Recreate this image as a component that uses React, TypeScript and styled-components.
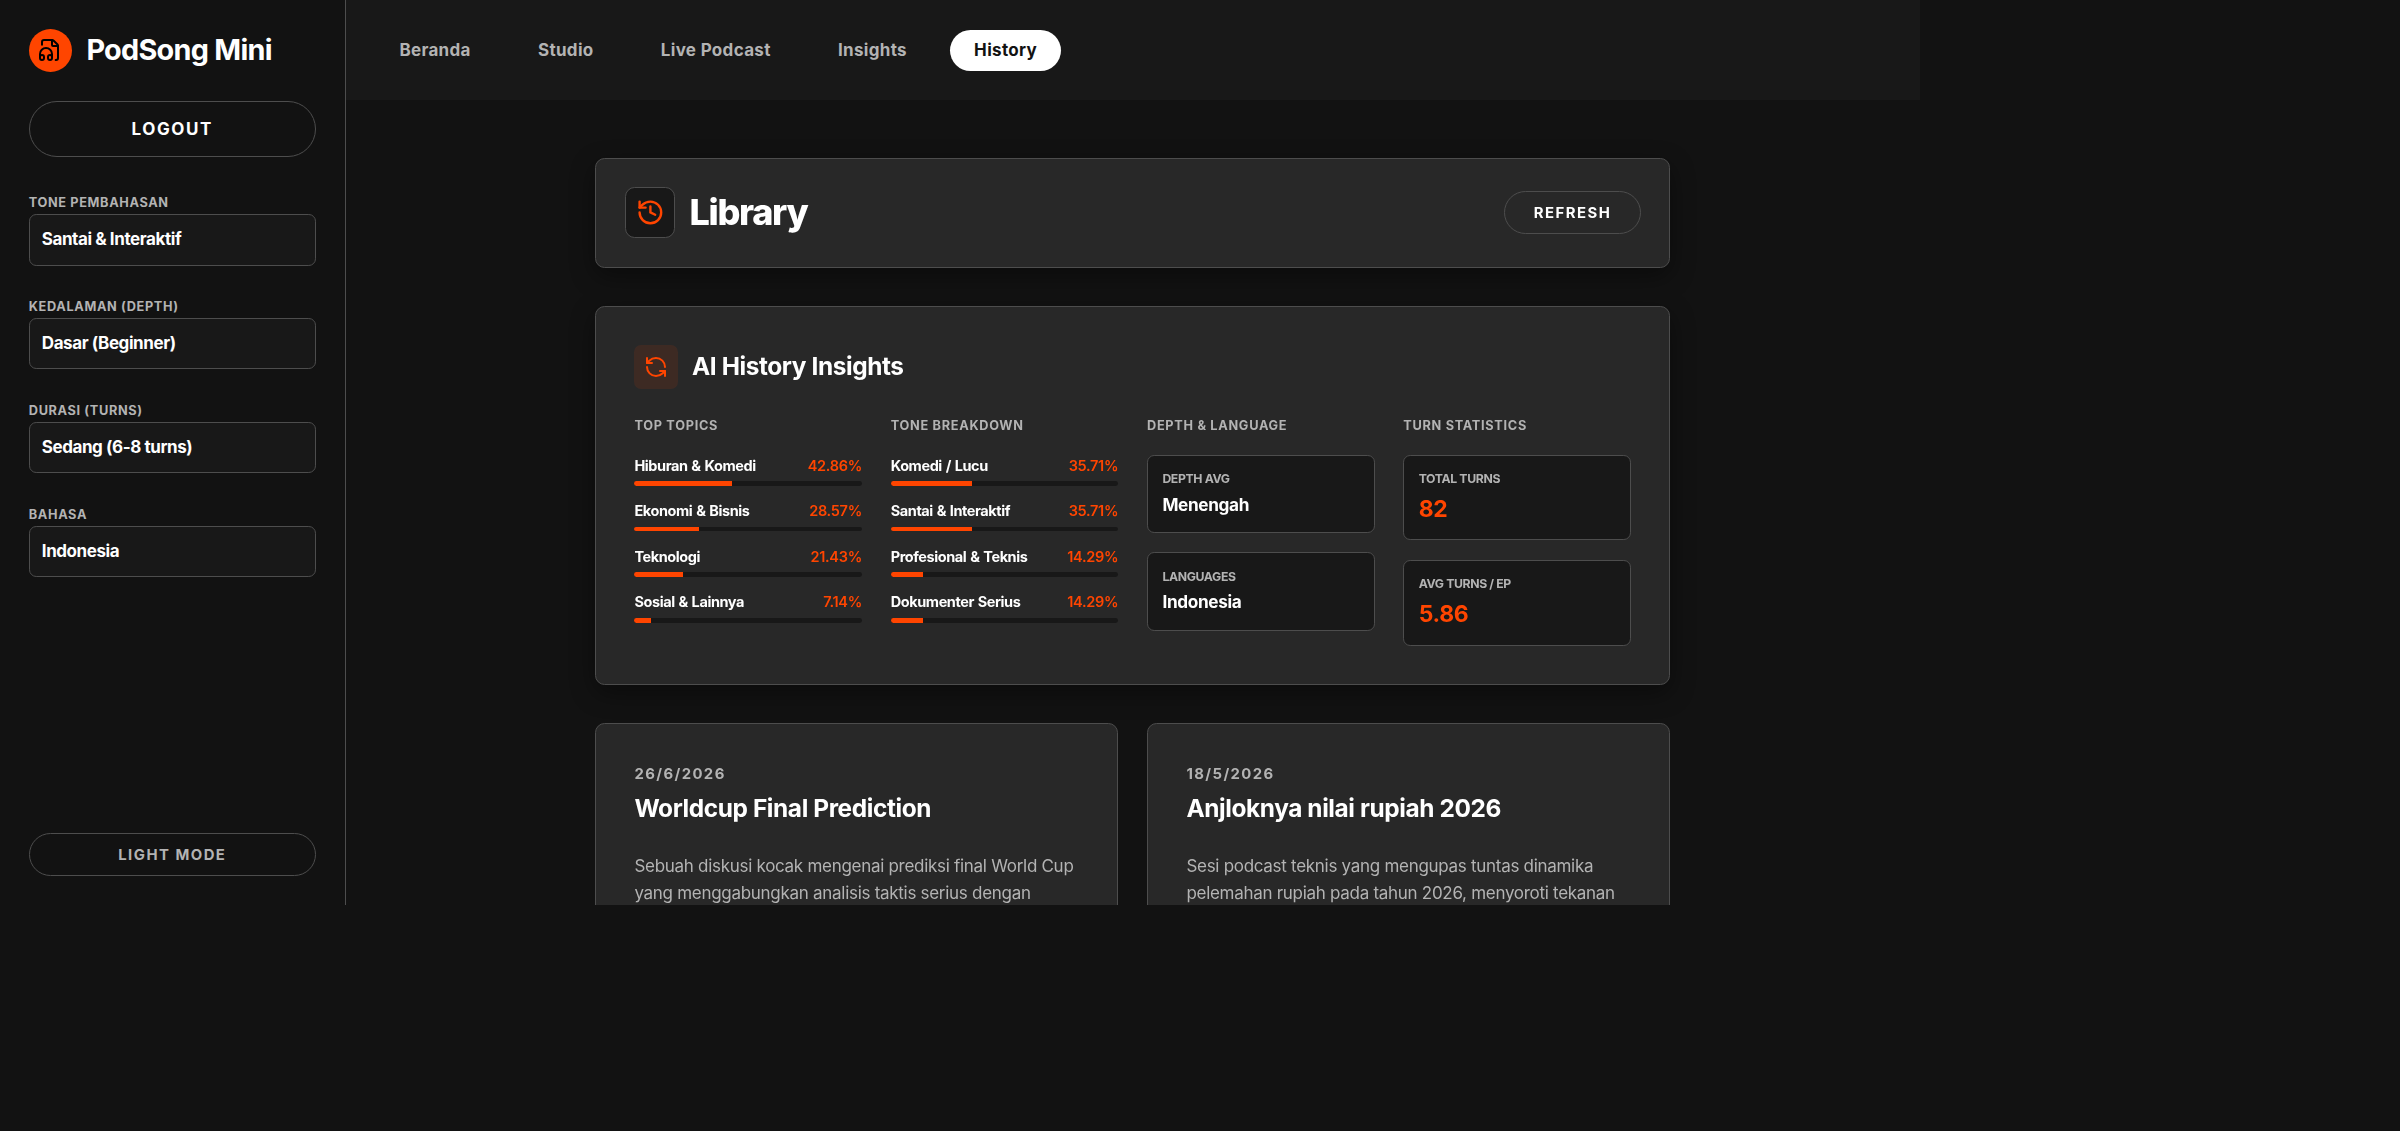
import React from "react";
import styled, { createGlobalStyle } from "styled-components";
import { History, RefreshCcw } from "lucide-react";

const c = {
  bg: "#121212",
  surface: "#181818",
  card: "#282828",
  line: "#4d4d4d",
  text: "#ffffff",
  muted: "#b3b3b3",
  accent: "#ff4500",
};

const GlobalStyle = createGlobalStyle`
  *, *::before, *::after { box-sizing: border-box; }
  html, body { margin: 0; background: ${c.bg}; }
  body {
    color: ${c.text};
    font-family: Inter, "Liberation Sans", sans-serif;
    font-size: 17px;
    line-height: 1.5;
    letter-spacing: -0.34px;
    overflow: hidden;
  }
  h1, h2, h3, h4, p { margin: 0; }
  button { font-family: inherit; cursor: pointer; }
`;

const Shell = styled.div`
  display: flex;
  width: 1920px;
  height: 904.8px;
  overflow: hidden;
`;

const Sidebar = styled.aside`
  display: flex;
  flex-direction: column;
  flex: none;
  width: 345.6px;
  padding: 28.8px;
  border-right: 1px solid ${c.line};
`;

const Brand = styled.div`
  display: flex;
  align-items: center;
  gap: 14.4px;
  height: 43.2px;
  margin-bottom: 28.8px;
`;

const BrandMark = styled.span`
  display: grid;
  place-items: center;
  width: 43.2px;
  height: 43.2px;
  border-radius: 50%;
  background: ${c.accent};
  color: #000;
`;

const BrandName = styled.span`
  font-size: 28.8px;
  font-weight: 700;
  line-height: 42px;
  letter-spacing: -0.025em;
`;

const PillButton = styled.button<{ $size?: "lg" | "md"; $muted?: boolean }>`
  flex: none;
  height: ${(p) => (p.$size === "lg" ? "55.8px" : "42.9px")};
  padding: 0 28.8px;
  border: 1px solid ${c.line};
  border-radius: 999px;
  background: transparent;
  color: ${(p) => (p.$muted ? c.muted : c.text)};
  font-size: ${(p) => (p.$size === "lg" ? "17px" : "14.875px")};
  font-weight: 700;
  letter-spacing: ${(p) => (p.$size === "lg" ? "0.095em" : "0.1em")};
  text-transform: uppercase;
`;

const Fields = styled.div`
  display: flex;
  flex: 1;
  flex-direction: column;
  gap: 31.7px;
  margin-top: 36.8px;
`;

const Field = styled.label`
  display: flex;
  flex-direction: column;
  gap: 1.7px;
`;

const FieldLabel = styled.span`
  color: ${c.muted};
  font-size: 12.75px;
  font-weight: 700;
  line-height: 19.1px;
  letter-spacing: 0.049em;
  text-transform: uppercase;
`;

const FieldValue = styled.span`
  height: 51.4px;
  padding: 0 12px;
  border: 1px solid ${c.line};
  border-radius: 7.2px;
  background: ${c.surface};
  font-weight: 700;
  line-height: 48.6px;
  letter-spacing: -0.42px;
`;

const Main = styled.div`
  display: flex;
  flex: 1;
  flex-direction: column;
  min-width: 0;
`;

const TopBar = styled.nav`
  display: flex;
  align-items: center;
  flex: none;
  gap: 19.2px;
  height: 100px;
  padding: 0 29.8px;
  background: ${c.surface};
`;

const NavItem = styled.a<{ $active?: boolean }>`
  padding: 0 24px;
  border-radius: 999px;
  background: ${(p) => (p.$active ? "#fff" : "transparent")};
  color: ${(p) => (p.$active ? c.bg : c.muted)};
  font-weight: 700;
  line-height: 41px;
  letter-spacing: 0.019em;
`;

const Scroller = styled.main`
  flex: 1;
  min-height: 0;
  padding: 57.6px 1.2px 0 0;
  overflow: hidden;
  will-change: transform;
`;

const Content = styled.div`
  display: flex;
  flex-direction: column;
  gap: 38.4px;
  width: 1075.2px;
  margin: 0 auto;
`;

const Card = styled.section`
  border: 1px solid ${c.line};
  border-radius: 9.6px;
  background: ${c.card};
`;

const RaisedCard = styled(Card)`
  box-shadow: 0 8px 24px rgba(0, 0, 0, 0.4);
`;

const LibraryHeader = styled(RaisedCard)`
  display: flex;
  align-items: center;
  justify-content: space-between;
  padding: 28.8px 28.1px 28.8px 28.8px;
`;

const TitleGroup = styled.div`
  display: flex;
  align-items: center;
  gap: 14.4px;
`;

const IconTile = styled.span<{ $tinted?: boolean }>`
  display: grid;
  place-items: center;
  width: ${(p) => (p.$tinted ? "43.2px" : "50.4px")};
  height: ${(p) => (p.$tinted ? "43.2px" : "50.4px")};
  border: ${(p) => (p.$tinted ? "none" : `1px solid ${c.line}`)};
  border-radius: ${(p) => (p.$tinted ? "7.2px" : "9.6px")};
  background: ${(p) => (p.$tinted ? "rgba(255, 69, 0, 0.1)" : c.surface)};
  color: ${c.accent};
`;

const PageTitle = styled.h1`
  padding-bottom: 2px;
  font-size: 36px;
  font-weight: 800;
  line-height: 48px;
  letter-spacing: -0.037em;
`;

const InsightsCard = styled(RaisedCard)`
  padding: 38.4px;
`;

const SectionTitle = styled.h2`
  padding-bottom: 1.4px;
  font-size: 24.4px;
  font-weight: 700;
  line-height: 36px;
  letter-spacing: -0.016em;
`;

const InsightGrid = styled.div`
  display: grid;
  grid-template-columns: repeat(4, 1fr);
  gap: 28.8px;
  margin-top: 28.8px;
`;

const ColumnTitle = styled.h4`
  padding-top: 0.8px;
  margin-bottom: 19.65px;
  color: ${c.muted};
  font-size: 12.75px;
  font-weight: 700;
  line-height: 16.8px;
  letter-spacing: 0.054em;
  text-transform: uppercase;
`;

const Stack = styled.div<{ $gap: number }>`
  display: flex;
  flex-direction: column;
  gap: ${(p) => p.$gap}px;
`;

const MeterHead = styled.div`
  display: flex;
  justify-content: space-between;
  margin-bottom: 4.8px;
  font-size: 14.5px;
  font-weight: 700;
  line-height: 21.6px;
  letter-spacing: -0.42px;
  word-spacing: 0.8px;
`;

const Percent = styled.span`
  color: ${c.accent};
  font-weight: 600;
  letter-spacing: -0.3px;
`;

const Track = styled.div`
  height: 4.8px;
  border-radius: 2.4px;
  background: ${c.surface};
  overflow: hidden;
`;

const Fill = styled.div`
  height: 100%;
  background: ${c.accent};
`;

const StatBox = styled.div`
  padding: 14.4px;
  border: 1px solid ${c.line};
  border-radius: 7.2px;
  background: ${c.surface};
`;

const StatLabel = styled.div`
  margin-bottom: 5.7px;
  color: ${c.muted};
  font-size: 12.24px;
  font-weight: 700;
  line-height: 17px;
  letter-spacing: -0.36px;
  text-transform: uppercase;
`;

const StatValue = styled.div<{ $big?: boolean }>`
  color: ${(p) => (p.$big ? c.accent : c.text)};
  font-size: ${(p) => (p.$big ? "22.95px" : "17.2px")};
  font-weight: 700;
  line-height: ${(p) => (p.$big ? "32.4px" : "24.9px")};
`;

const Episodes = styled.div`
  display: grid;
  grid-template-columns: repeat(2, 1fr);
  gap: 28.8px;
`;

const EpisodeCard = styled(Card)`
  padding: 38.4px;
`;

const EpisodeDate = styled.div`
  padding-top: 0.7px;
  color: ${c.muted};
  font-size: 14.875px;
  font-weight: 700;
  line-height: 22.3px;
  letter-spacing: 0.095em;
`;

const EpisodeTitle = styled.h3`
  margin: 6.6px 0 28.9px;
  font-size: 24.4px;
  font-weight: 700;
  line-height: 32px;
  letter-spacing: -0.016em;
`;

const EpisodeText = styled.p`
  color: ${c.muted};
  line-height: 27.2px;
  letter-spacing: -0.29px;
`;

const FileHeadphones = () => (
  <svg width="24" height="24" viewBox="0 0 24 24" fill="none" stroke="currentColor" strokeWidth="2" strokeLinecap="round" strokeLinejoin="round">
    <path d="M4 6.835V4a2 2 0 0 1 2-2h8a2.4 2.4 0 0 1 1.706.706l3.588 3.588A2.4 2.4 0 0 1 20 8v12a2 2 0 0 1-2 2h-.343" />
    <path d="M14 2v5a1 1 0 0 0 1 1h5" />
    <path d="M2 19a2 2 0 0 1 4 0v1a2 2 0 0 1-4 0v-4a6 6 0 0 1 12 0v4a2 2 0 0 1-4 0v-1a2 2 0 0 1 4 0" />
  </svg>
);

const fields = [
  ["Tone Pembahasan", "Santai & Interaktif"],
  ["Kedalaman (Depth)", "Dasar (Beginner)"],
  ["Durasi (Turns)", "Sedang (6-8 turns)"],
  ["Bahasa", "Indonesia"],
];

const navItems = ["Beranda", "Studio", "Live Podcast", "Insights", "History"];

type Share = { name: string; value: number };

const topics: Share[] = [
  { name: "Hiburan & Komedi", value: 42.86 },
  { name: "Ekonomi & Bisnis", value: 28.57 },
  { name: "Teknologi", value: 21.43 },
  { name: "Sosial & Lainnya", value: 7.14 },
];

const tones: Share[] = [
  { name: "Komedi / Lucu", value: 35.71 },
  { name: "Santai & Interaktif", value: 35.71 },
  { name: "Profesional & Teknis", value: 14.29 },
  { name: "Dokumenter Serius", value: 14.29 },
];

const episodes = [
  {
    date: "26/6/2026",
    title: "Worldcup Final Prediction",
    lines: ["Sebuah diskusi kocak mengenai prediksi final World Cup", "yang menggabungkan analisis taktis serius dengan"],
  },
  {
    date: "18/5/2026",
    title: "Anjloknya nilai rupiah 2026",
    lines: ["Sesi podcast teknis yang mengupas tuntas dinamika", "pelemahan rupiah pada tahun 2026, menyoroti tekanan"],
  },
];

const Meters = ({ title, items }: { title: string; items: Share[] }) => (
  <div>
    <ColumnTitle>{title}</ColumnTitle>
    <Stack $gap={14.4}>
      {items.map((item) => (
        <div key={item.name}>
          <MeterHead>
            <span>{item.name}</span>
            <Percent>{item.value}%</Percent>
          </MeterHead>
          <Track>
            <Fill style={{ width: `${item.value}%` }} />
          </Track>
        </div>
      ))}
    </Stack>
  </div>
);

const Stats = ({ title, items, big }: { title: string; items: string[][]; big?: boolean }) => (
  <div>
    <ColumnTitle>{title}</ColumnTitle>
    <Stack $gap={19.2}>
      {items.map(([label, value]) => (
        <StatBox key={label}>
          <StatLabel>{label}</StatLabel>
          <StatValue $big={big}>{value}</StatValue>
        </StatBox>
      ))}
    </Stack>
  </div>
);

export default function App() {
  return (
    <>
      <GlobalStyle />
      <Shell>
        <Sidebar>
          <Brand>
            <BrandMark>
              <FileHeadphones />
            </BrandMark>
            <BrandName>PodSong Mini</BrandName>
          </Brand>
          <PillButton $size="lg">Logout</PillButton>
          <Fields>
            {fields.map(([label, value]) => (
              <Field key={label}>
                <FieldLabel>{label}</FieldLabel>
                <FieldValue>{value}</FieldValue>
              </Field>
            ))}
          </Fields>
          <PillButton $muted>Light Mode</PillButton>
        </Sidebar>
        <Main>
          <TopBar>
            {navItems.map((item) => (
              <NavItem key={item} $active={item === "History"}>
                {item}
              </NavItem>
            ))}
          </TopBar>
          <Scroller>
            <Content>
              <LibraryHeader>
                <TitleGroup>
                  <IconTile>
                    <History size={28.8} />
                  </IconTile>
                  <PageTitle>Library</PageTitle>
                </TitleGroup>
                <PillButton>Refresh</PillButton>
              </LibraryHeader>
              <InsightsCard>
                <TitleGroup>
                  <IconTile $tinted>
                    <RefreshCcw size={24} />
                  </IconTile>
                  <SectionTitle>AI History Insights</SectionTitle>
                </TitleGroup>
                <InsightGrid>
                  <Meters title="Top Topics" items={topics} />
                  <Meters title="Tone Breakdown" items={tones} />
                  <Stats title="Depth & Language" items={[["Depth Avg", "Menengah"], ["Languages", "Indonesia"]]} />
                  <Stats title="Turn Statistics" items={[["Total Turns", "82"], ["Avg Turns / Ep", "5.86"]]} big />
                </InsightGrid>
              </InsightsCard>
              <Episodes>
                {episodes.map((ep) => (
                  <EpisodeCard key={ep.date}>
                    <EpisodeDate>{ep.date}</EpisodeDate>
                    <EpisodeTitle>{ep.title}</EpisodeTitle>
                    <EpisodeText>
                      {ep.lines[0]}
                      <br />
                      {ep.lines[1]}
                    </EpisodeText>
                  </EpisodeCard>
                ))}
              </Episodes>
            </Content>
          </Scroller>
        </Main>
      </Shell>
    </>
  );
}
